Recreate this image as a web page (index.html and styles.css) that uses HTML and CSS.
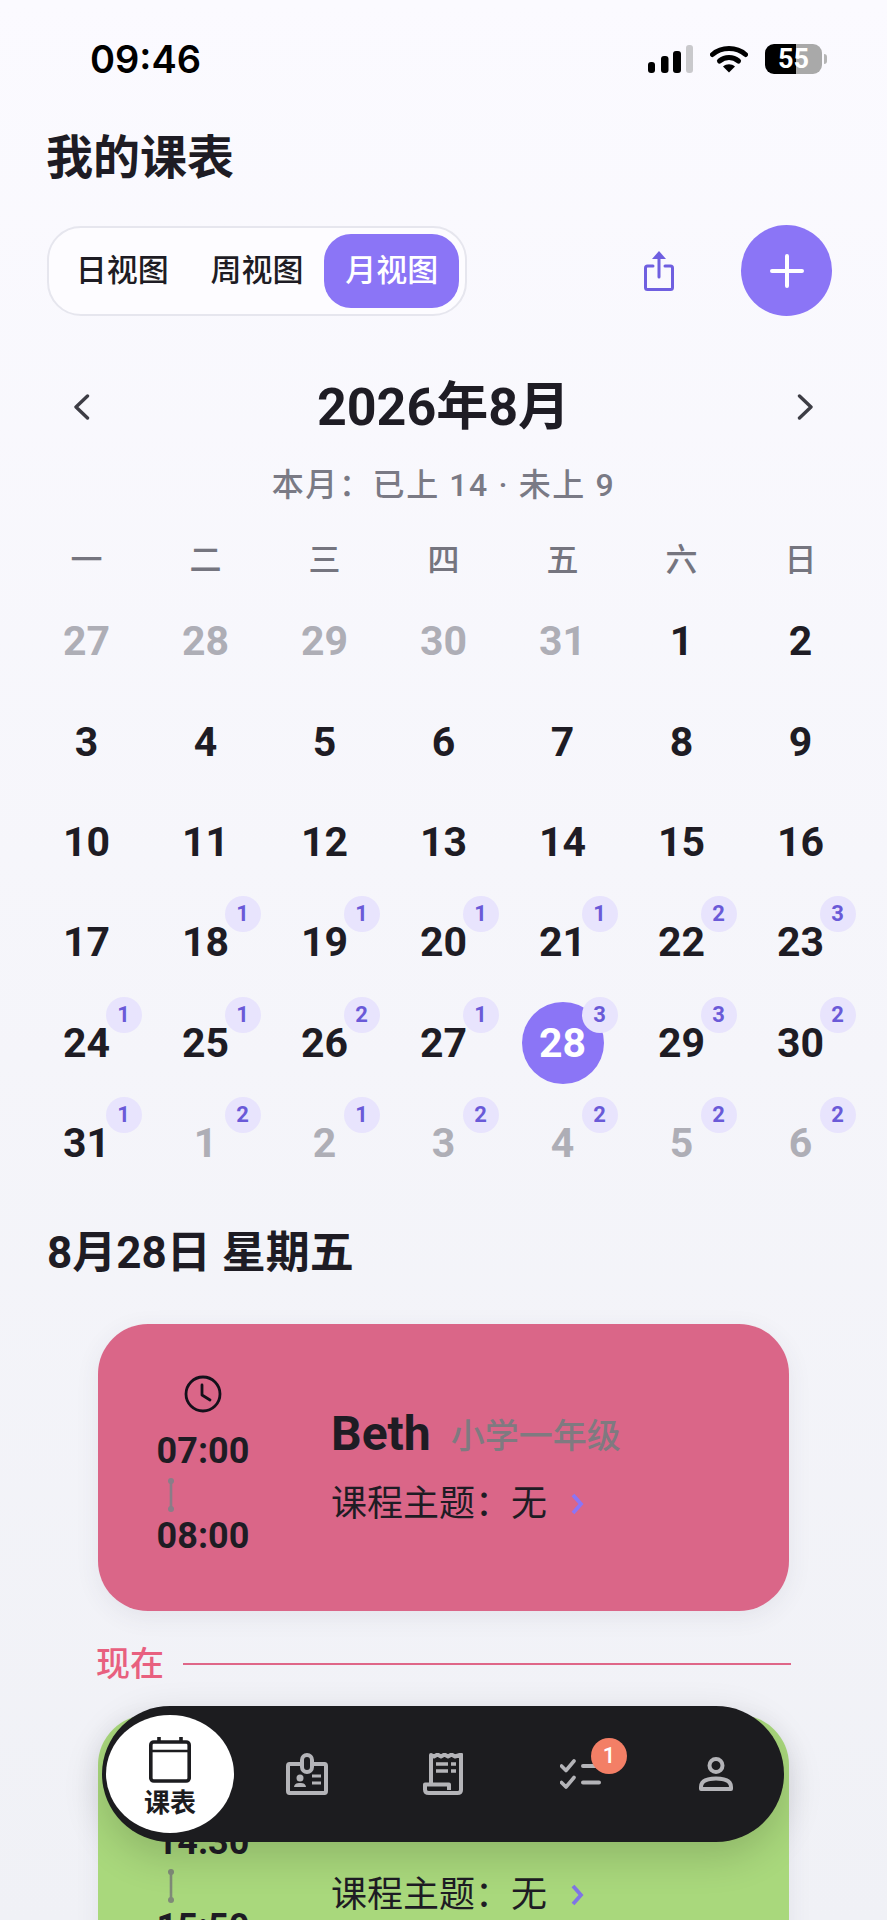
FILE: index.html
```html
<!DOCTYPE html>
<html lang="zh-CN">
<head>
    <meta charset="UTF-8">
    <meta name="viewport" content="width=device-width, initial-scale=1.0">
    <title>我的课表</title>
    <link rel="stylesheet" href="styles.css">
</head>
<body>
<div class="screen">

    <div class="status-bar">
        <span class="status-time">09:46</span>
        <div class="status-icons">
            <svg class="icon-signal" width="45" height="28" viewBox="0 0 45 28">
                <rect x="0" y="17" width="7" height="11" rx="3" fill="#000"/>
                <rect x="13" y="11" width="7.5" height="17" rx="3" fill="#000"/>
                <rect x="25" y="6" width="8" height="22" rx="3" fill="#000"/>
                <rect x="38" y="0" width="7" height="28" rx="3" fill="#c9c9cc"/>
            </svg>
            <svg class="icon-wifi" width="38" height="28" viewBox="0 0 38 28">
                <path d="M2.500 9.500C11.500 1.500 26.500 1.500 35.500 9.500" fill="none" stroke="#000" stroke-width="5" stroke-linecap="round"/>
                <path d="M9.500 16C15 11.200 23 11.200 28.500 16" fill="none" stroke="#000" stroke-width="5" stroke-linecap="round"/>
                <path d="M13 21.500L19 27.500L25 21.500C21.500 18.500 16.500 18.500 13 21.500Z" fill="#000"/>
            </svg>
            <div class="battery">
                <div class="battery-body">55</div>
                <span class="battery-nub"></span>
            </div>
        </div>
    </div>

    <h1 class="page-title">我的课表</h1>

    <div class="toolbar">
        <div class="view-switch">
            <span class="view-item">日视图</span>
            <span class="view-item">周视图</span>
            <span class="view-item view-active">月视图</span>
        </div>
        <svg class="icon-share" width="30" height="40" viewBox="0 0 30 40">
            <path d="M9 15H3.500C2 15 1.500 16 1.500 17V36.500C1.500 37.500 2 38.500 3.500 38.500H26.500C28 38.500 28.500 37.500 28.500 36.500V17C28.500 16 28 15 26.500 15H21" fill="none" stroke="#6f5fe0" stroke-width="3" stroke-linecap="round"/>
            <path d="M15 6V26" fill="none" stroke="#6f5fe0" stroke-width="3" stroke-linecap="round"/>
            <path d="M15 0L22 8H8Z" fill="#6f5fe0"/>
        </svg>
        <div class="add-btn">
            <svg width="34" height="34" viewBox="0 0 34 34">
                <path d="M17 2V32M2 17H32" fill="none" stroke="#fff" stroke-width="4" stroke-linecap="round"/>
            </svg>
        </div>
    </div>

    <div class="month-nav">
        <svg width="17" height="26" viewBox="0 0 17 26"><path d="M14.500 2L3 13L14.500 24" fill="none" stroke="#3d3d45" stroke-width="3.400" stroke-linecap="round" stroke-linejoin="round"/></svg>
        <span class="month-title">2026年8月</span>
        <svg width="17" height="26" viewBox="0 0 17 26"><path d="M2.500 2L14 13L2.500 24" fill="none" stroke="#3d3d45" stroke-width="3.400" stroke-linecap="round" stroke-linejoin="round"/></svg>
    </div>
    <div class="month-summary">本月：已上 14 · 未上 9</div>

    <div class="weekdays">
        <span>一</span><span>二</span><span>三</span><span>四</span><span>五</span><span>六</span><span>日</span>
    </div>

    <div class="days">
        <div class="day day-muted">27</div>
        <div class="day day-muted">28</div>
        <div class="day day-muted">29</div>
        <div class="day day-muted">30</div>
        <div class="day day-muted">31</div>
        <div class="day">1</div>
        <div class="day">2</div>

        <div class="day">3</div>
        <div class="day">4</div>
        <div class="day">5</div>
        <div class="day">6</div>
        <div class="day">7</div>
        <div class="day">8</div>
        <div class="day">9</div>

        <div class="day">10</div>
        <div class="day">11</div>
        <div class="day">12</div>
        <div class="day">13</div>
        <div class="day">14</div>
        <div class="day">15</div>
        <div class="day">16</div>

        <div class="day">17</div>
        <div class="day">18<span class="count">1</span></div>
        <div class="day">19<span class="count">1</span></div>
        <div class="day">20<span class="count">1</span></div>
        <div class="day">21<span class="count">1</span></div>
        <div class="day">22<span class="count">2</span></div>
        <div class="day">23<span class="count">3</span></div>

        <div class="day">24<span class="count">1</span></div>
        <div class="day">25<span class="count">1</span></div>
        <div class="day">26<span class="count">2</span></div>
        <div class="day">27<span class="count">1</span></div>
        <div class="day day-selected"><span class="day-circle">28</span><span class="count">3</span></div>
        <div class="day">29<span class="count">3</span></div>
        <div class="day">30<span class="count">2</span></div>

        <div class="day">31<span class="count">1</span></div>
        <div class="day day-muted">1<span class="count">2</span></div>
        <div class="day day-muted">2<span class="count">1</span></div>
        <div class="day day-muted">3<span class="count">2</span></div>
        <div class="day day-muted">4<span class="count">2</span></div>
        <div class="day day-muted">5<span class="count">2</span></div>
        <div class="day day-muted">6<span class="count">2</span></div>
    </div>

    <h2 class="date-title">8月28日 星期五</h2>

    <div class="lesson lesson-pink">
        <div class="lesson-time">
            <svg class="icon-clock" width="38" height="38" viewBox="0 0 38 38">
                <circle cx="19" cy="19" r="17" fill="none" stroke="#14101a" stroke-width="2.800"/>
                <path d="M18 10V20L26 25" fill="none" stroke="#14101a" stroke-width="2.800" stroke-linecap="round" stroke-linejoin="round"/>
            </svg>
            <span class="time-text">07:00</span>
            <svg class="time-line" width="6" height="34" viewBox="0 0 6 34">
                <path d="M3 3V31" stroke="#8a7d88" stroke-width="2.600"/>
                <circle cx="3" cy="3" r="3" fill="#8a7d88"/>
                <circle cx="3" cy="31" r="3" fill="#8a7d88"/>
            </svg>
            <span class="time-text time-end">08:00</span>
        </div>
        <div class="lesson-info">
            <div class="lesson-head">
                <span class="student">Beth</span>
                <span class="grade">小学一年级</span>
            </div>
            <div class="topic">
                <span>课程主题：无</span>
                <svg width="14" height="22" viewBox="0 0 14 22"><path d="M3 2L11 11L3 20" fill="none" stroke="#8b75f6" stroke-width="3.800"/></svg>
            </div>
        </div>
    </div>

    <div class="now-row">
        <span class="now-label">现在</span>
        <span class="now-line"></span>
    </div>

    <div class="lesson lesson-green">
        <div class="lesson-time">
            <svg class="icon-clock" width="38" height="38" viewBox="0 0 38 38">
                <circle cx="19" cy="19" r="17" fill="none" stroke="#14101a" stroke-width="2.800"/>
                <path d="M18 10V20L26 25" fill="none" stroke="#14101a" stroke-width="2.800" stroke-linecap="round" stroke-linejoin="round"/>
            </svg>
            <span class="time-text">14:30</span>
            <svg class="time-line" width="6" height="34" viewBox="0 0 6 34">
                <path d="M3 3V31" stroke="#7f8a78" stroke-width="2.600"/>
                <circle cx="3" cy="3" r="3" fill="#7f8a78"/>
                <circle cx="3" cy="31" r="3" fill="#7f8a78"/>
            </svg>
            <span class="time-text time-end">15:50</span>
        </div>
        <div class="lesson-info">
            <div class="lesson-head">
                <span class="student">Beth</span>
            </div>
            <div class="topic">
                <span>课程主题：无</span>
                <svg width="14" height="22" viewBox="0 0 14 22"><path d="M3 2L11 11L3 20" fill="none" stroke="#7f75e6" stroke-width="3.800"/></svg>
            </div>
        </div>
    </div>

    <div class="tab-bar">
        <div class="tab tab-active">
            <svg width="42" height="46" viewBox="0 0 42 46">
                <rect x="1.800" y="5" width="38.400" height="39" rx="3" fill="none" stroke="#1c1c1f" stroke-width="3.600"/>
                <path d="M2 14H40" stroke="#1c1c1f" stroke-width="2.400"/>
                <path d="M10 0V5M32 0V5" stroke="#1c1c1f" stroke-width="3.600"/>
            </svg>
            <span class="tab-label">课表</span>
        </div>
        <div class="tab">
            <svg width="42" height="42" viewBox="0 0 42 42">
                <path d="M15 11H3.500C2.500 11 2 11.500 2 13V38C2 39.500 2.500 40 3.500 40H38.500C39.500 40 40 39.500 40 38V13C40 11.500 39.500 11 38.500 11H27" fill="none" stroke="#b4b4b8" stroke-width="4"/>
                <rect x="16" y="2" width="10" height="17" rx="5" fill="none" stroke="#b4b4b8" stroke-width="4"/>
                <circle cx="14" cy="25" r="3.500" fill="#b4b4b8"/>
                <path d="M8 34C8.500 30.500 11 30 14 30C17 30 19.500 30.500 20 34Z" fill="#b4b4b8"/>
                <path d="M26 23H35M26 30H35" stroke="#b4b4b8" stroke-width="3"/>
            </svg>
        </div>
        <div class="tab">
            <svg width="40" height="42" viewBox="0 0 40 42">
                <path d="M8 30V2L11 3.500L14.500 1.500L18 3.500L21.500 1.500L25 3.500L28.500 1.500L32 3.500L38 1.500V37C38 39 36.500 40 34.500 40H6C3.500 40 2 39 2 36.500V31.500H26V37" fill="none" stroke="#b4b4b8" stroke-width="4" stroke-linejoin="round"/>
                <path d="M13 11H25M28 11H33M13 18H25M28 18H33" stroke="#b4b4b8" stroke-width="3.500"/>
            </svg>
        </div>
        <div class="tab">
            <svg class="icon-checks" width="42" height="30" viewBox="0 0 42 30">
                <path d="M1.500 7L6 11.500L14 2M1.500 23.500L6 28L14 18.500" fill="none" stroke="#b4b4b8" stroke-width="3.600" stroke-linecap="round" stroke-linejoin="round"/>
                <path d="M23 7H39M23 23.500H39" stroke="#b4b4b8" stroke-width="4" stroke-linecap="round"/>
            </svg>
            <span class="tab-badge">1</span>
        </div>
        <div class="tab">
            <svg class="icon-person" width="34" height="34" viewBox="0 0 34 34">
                <circle cx="17" cy="8.500" r="6.500" fill="none" stroke="#b4b4b8" stroke-width="4"/>
                <path d="M2 32V30C2 24 7 21.500 17 21.500C27 21.500 32 24 32 30V32Z" fill="none" stroke="#b4b4b8" stroke-width="4" stroke-linejoin="round"/>
            </svg>
        </div>
    </div>

</div>
</body>
</html>
```

FILE: styles.css
```css
* {
    box-sizing: border-box;
}
body {
    margin: 0;
    font-family: Roboto, "Noto Sans CJK SC", sans-serif;
    color: #1e1c24;
}
.screen {
    position: relative;
    width: 887px;
    height: 1920px;
    overflow: hidden;
    background: linear-gradient(180deg, #fbfaff 0%, #f0f1f6 100%);
}

/* status bar */
.status-bar {
    display: flex;
    justify-content: space-between;
    align-items: center;
    height: 118px;
    padding: 0 60px 0 90px;
}
.status-time {
    font-family: Inter, sans-serif;
    font-size: 38px;
    font-weight: 600;
    color: #000;
}
.status-icons {
    display: flex;
    align-items: center;
}
.icon-wifi {
    margin-left: 17px;
}
.battery {
    display: flex;
    align-items: center;
    margin-left: 17px;
}
.battery-body {
    width: 57px;
    height: 30px;
    border-radius: 9px;
    background: linear-gradient(90deg, #000 0%, #000 54%, #a9a9a9 54%, #a9a9a9 100%);
    color: #fff;
    font-size: 27px;
    font-weight: 700;
    line-height: 30px;
    text-align: center;
}
.battery-nub {
    width: 3px;
    height: 10px;
    margin-left: 2px;
    border-radius: 0 3px 3px 0;
    background: #b5b5b5;
}

.page-title {
    margin: 10px 0 0 46px;
    font-size: 47px;
    font-weight: 700;
    line-height: 60px;
}

/* view switch and actions */
.toolbar {
    display: flex;
    align-items: center;
    height: 91px;
    margin-top: 37px;
    padding: 0 55px 0 47px;
}
.view-switch {
    display: flex;
    width: 420px;
    height: 90px;
    padding: 6px;
    border: 2px solid #e6e6ee;
    border-radius: 34px;
    background: #fdfcff;
}
.view-item {
    flex: 1;
    border-radius: 27px;
    font-size: 31px;
    font-weight: 500;
    line-height: 74px;
    text-align: center;
}
.view-active {
    background: #8b75f6;
    color: #fff;
}
.icon-share {
    margin-left: auto;
}
.add-btn {
    display: flex;
    align-items: center;
    justify-content: center;
    width: 91px;
    height: 91px;
    margin-left: 67px;
    border-radius: 50%;
    background: #8b75f6;
}

/* month header */
.month-nav {
    display: flex;
    justify-content: space-between;
    align-items: center;
    height: 60px;
    margin-top: 61px;
    padding: 0 73px;
}
.month-title {
    margin-bottom: 9px;
    font-size: 52px;
    font-weight: 700;
}
.month-summary {
    margin-top: 28px;
    color: #7a7a85;
    font-size: 32px;
    font-weight: 500;
    letter-spacing: 1.600px;
    line-height: 40px;
    text-align: center;
}
.weekdays {
    display: grid;
    grid-template-columns: repeat(7, 119px);
    margin: 35px 0 0 27px;
    color: #75757f;
    font-size: 32px;
    font-weight: 500;
    line-height: 40px;
    text-align: center;
}

/* day grid */
.days {
    display: grid;
    grid-template-columns: repeat(7, 119px);
    grid-auto-rows: 100.4px;
    margin: 11px 0 0 27px;
}
.day {
    position: relative;
    display: flex;
    align-items: center;
    justify-content: center;
    font-size: 41px;
    font-weight: 700;
}
.day-muted {
    color: #aeaeb6;
}
.day-circle {
    display: flex;
    align-items: center;
    justify-content: center;
    width: 82px;
    height: 82px;
    border-radius: 50%;
    background: #8b75f6;
    color: #fff;
}
.count {
    position: absolute;
    top: 4px;
    left: calc(50% + 19px);
    width: 36px;
    height: 36px;
    border-radius: 50%;
    background: #e8e4fd;
    color: #6a5ad8;
    font-size: 22px;
    font-weight: 700;
    line-height: 36px;
    text-align: center;
}

.date-title {
    margin: 32px 0 0 47px;
    font-size: 44px;
    font-weight: 700;
    line-height: 56px;
}

/* lesson cards */
.lesson {
    display: flex;
    width: 691px;
    height: 287px;
    margin: 43px 0 0 98px;
    border-radius: 50px;
    box-shadow: 0 6px 24px rgba(60, 60, 90, 0.08);
}
.lesson-pink {
    background: #da6688;
}
.lesson-green {
    margin-top: 31px;
    background: #a9d87c;
}
.lesson-time {
    display: flex;
    flex-direction: column;
    align-items: center;
    width: 210px;
    padding-top: 51px;
}
.time-text {
    margin-top: 18px;
    font-size: 36px;
    font-weight: 700;
    line-height: 40px;
}
.time-line {
    align-self: flex-start;
    margin: 7px 0 0 70px;
}
.time-end {
    margin-top: 4px;
}
.lesson-info {
    padding: 79px 0 0 23px;
}
.lesson-head {
    display: flex;
    align-items: center;
    height: 60px;
}
.student {
    font-size: 48px;
    font-weight: 700;
}
.grade {
    margin-left: 20px;
    color: #7f7a80;
    font-size: 34px;
    font-weight: 500;
}
.topic {
    display: flex;
    align-items: center;
    margin-top: 16px;
    font-size: 36px;
    line-height: 50px;
}
.topic svg {
    margin-left: 23px;
}

.now-row {
    display: flex;
    align-items: center;
    width: 695px;
    margin: 33px 0 0 96px;
}
.now-label {
    color: #e8607f;
    font-size: 34px;
    font-weight: 500;
    line-height: 40px;
}
.now-line {
    flex: 1;
    height: 2px;
    margin-left: 19px;
    background: #df6688;
}

/* bottom tabs */
.tab-bar {
    position: absolute;
    top: 1706px;
    left: 102px;
    display: grid;
    grid-template-columns: repeat(5, 136px);
    width: 682px;
    height: 136px;
    padding: 0 1px;
    border-radius: 68px;
    background: #1c1c1f;
    box-shadow: 0 14px 40px rgba(0, 0, 0, 0.16);
}
.tab {
    position: relative;
    display: flex;
    flex-direction: column;
    align-items: center;
    justify-content: center;
}
.tab-active {
    width: 128px;
    height: 118px;
    margin: 9px 0 0 3px;
    padding-top: 8px;
    border-radius: 50%;
    background: #fff;
}
.tab-label {
    margin-top: 3px;
    color: #1c1c1f;
    font-size: 26px;
    font-weight: 700;
    line-height: 34px;
}
.icon-checks {
    margin-left: 4px;
}
.icon-person {
    margin-left: 2px;
}
.tab-badge {
    position: absolute;
    top: 32px;
    left: 80px;
    width: 36px;
    height: 36px;
    border-radius: 50%;
    background: #f37f66;
    color: #fff;
    font-size: 22px;
    font-weight: 500;
    line-height: 36px;
    text-align: center;
}
```
